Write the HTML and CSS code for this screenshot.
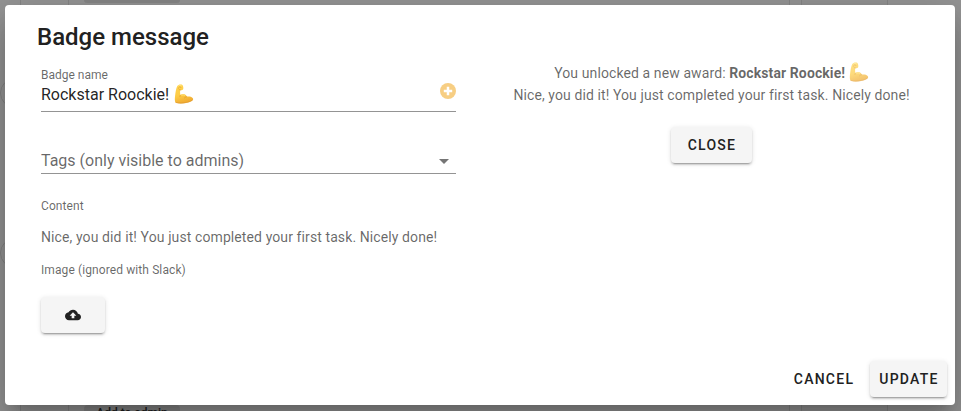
FILE: index.html
```html
<!DOCTYPE html>
<html lang="en">
<head>
<meta charset="utf-8">
<title>Badge message</title>
<link rel="stylesheet" href="styles.css">
</head>
<body>
<svg class="defs" aria-hidden="true">
  <defs>
    <linearGradient id="skin" x1="0" y1="0" x2="0.3" y2="1">
      <stop offset="0" stop-color="#ffd451"/>
      <stop offset="0.6" stop-color="#fdcb45"/>
      <stop offset="1" stop-color="#f0ac33"/>
    </linearGradient>
    <symbol id="biceps" viewBox="0 0 20 20">
      <path d="M3.200 2.200C4 .8 6.200.1 7.600.6c1.200.5 1.900 2.300 1.700 4-.1 1.200-1.100 1.900-2.300 1.600l-.9-.2c0 1.700 0 3.400.1 5.100 1.600-1.400 4.200-1.500 5.500-.2.5.500.9 1 1.200 1.700 2.100-.4 4.200-.1 5.700 1.300 1 1.100.5 2.100-.5 2.800-1.700 1.200-3.500 1.700-5.500 2.100-3.500.8-7.700 1-10.700 0C.5 17.700.8 14 1.200 10.800 1.500 8.200 2.200 4 3.200 2.200z" fill="url(#skin)"/>
      <path d="M4.800 3.300c.8-.8 1.900-.5 2.200.2M4.600 4.800c.5.900 1.200 1.200 2 1.300M6.300 11.100c-.3.500-.4.900-.4 1.400M12.700 12.700c-1 .2-1.700.5-2.200 1.100M1.900 18.500c3.200 1 7.500.7 11-.1 2-.5 3.700-1 5.200-2" fill="none" stroke="#dc9328" stroke-width=".6" stroke-linecap="round"/>
      <path d="M4.800 1.700c.8-.5 1.800-.5 2.500 0M8 11.200c.9-.6 2-.5 2.600.1" fill="none" stroke="#ffeb8a" stroke-width=".8" stroke-linecap="round"/>
    </symbol>
  </defs>
</svg>
<div class="page">
  <div class="col gutter"></div>
  <div class="col rail"></div>
  <div class="col main">
    <div class="chip"></div>
    <div class="chip">Add to admin</div>
  </div>
  <div class="col gap"></div>
  <div class="col side"></div>
  <div class="col rest"></div>
  <i class="dot dot-top"></i>
  <i class="dot dot-mid"></i>
</div>
<div class="overlay">
  <section class="dialog">
    <h1 class="title">Badge message</h1>
    <div class="body">
      <div class="form">
        <div class="field name">
          <div class="field-text">
            <label class="label">Badge name</label>
            <div class="value">Rockstar Roockie! <svg class="emoji"><use href="#biceps"/></svg></div>
          </div>
          <svg class="plus" viewBox="0 0 16 16"><circle cx="8" cy="8" r="8" fill="#f7ce83"/><path d="M8 3.800v8.400M3.800 8h8.400" stroke="#fff" stroke-width="2.500"/></svg>
        </div>
        <div class="field tags">
          <span>Tags (only visible to admins)</span>
          <svg class="caret" viewBox="0 0 10 5"><path d="M0 0h10L5 5z" fill="#757575"/></svg>
        </div>
        <div class="caption">Content</div>
        <div class="copy content">Nice, you did it! You just completed your first task. Nicely done!</div>
        <div class="caption image">Image (ignored with Slack)</div>
        <button class="btn upload"><svg class="cloud" viewBox="0 0 24 24"><path fill="#212121" d="M19.350 10.040C18.670 6.590 15.640 4 12 4 9.110 4 6.600 5.640 5.350 8.040 2.340 8.360 0 10.910 0 14c0 3.310 2.690 6 6 6h13c2.760 0 5-2.240 5-5 0-2.640-2.050-4.780-4.650-4.960zM14 13v4h-4v-4H7l5-5 5 5h-3z"/></svg></button>
      </div>
      <div class="preview copy">
        <div class="award">You unlocked a new award: <b>Rockstar Roockie! <svg class="emoji faded"><use href="#biceps"/></svg></b></div>
        <div>Nice, you did it! You just completed your first task. Nicely done!</div>
        <button class="btn close">CLOSE</button>
      </div>
    </div>
    <footer class="actions">
      <button class="btn flat">CANCEL</button>
      <button class="btn update">UPDATE</button>
    </footer>
  </section>
</div>
</body>
</html>
```
FILE: styles.css
```css
* { box-sizing: border-box; }
body {
  margin: 0;
  width: 961px;
  height: 411px;
  overflow: hidden;
  position: relative;
  background: #fafafa;
  font-family: Roboto, sans-serif;
  color: #212121;
}
.defs { position: absolute; width: 0; height: 0; }

.page { display: flex; height: 411px; position: relative; overflow: hidden; }
.col { border-right: 1px solid #dcdcdc; }
.gutter { width: 21px; }
.rail { width: 48px; }
.main {
  width: 721px;
  padding-left: 15px;
  display: flex;
  flex-direction: column;
  gap: 402px;
}
.chip {
  width: 96px;
  height: 28px;
  flex: none;
  border-radius: 4px;
  background: #dedede;
  font-size: 12px;
  font-weight: 500;
  line-height: 16px;
  text-align: center;
}
.chip:first-child { height: 3px; border-radius: 0 0 4px 4px; }
.gap { width: 12px; }
.side { width: 86px; background: #f5f5f5; }
.rest { flex: 1; border: 0; }
.dot {
  position: absolute;
  left: 0;
  width: 30px;
  height: 30px;
  border: 1px solid #d8d8d8;
  border-radius: 50%;
}
.dot-top { top: 78px; }
.dot-mid { top: 238px; }

.overlay {
  position: absolute;
  inset: 0;
  padding: 5px 6px 6px 5px;
  background: rgba(33, 33, 33, 0.46);
}
.dialog {
  display: flex;
  flex-direction: column;
  height: 400px;
  padding: 16px 8px 8px 32px;
  border-radius: 4px;
  background: #fff;
  box-shadow: 0 11px 15px -7px rgba(0, 0, 0, 0.2), 0 24px 38px 3px rgba(0, 0, 0, 0.14), 0 9px 46px 8px rgba(0, 0, 0, 0.12);
}
.title { margin: 0; font-size: 24px; font-weight: 500; line-height: 32px; }
.body { display: flex; padding-left: 4px; flex: 1; }
.form { width: 415px; display: flex; flex-direction: column; align-items: flex-start; }
.field {
  width: 100%;
  display: flex;
  justify-content: space-between;
  border-bottom: 1px solid #949494;
}
.name { height: 59px; padding-top: 14px; }
.label { display: block; font-size: 12px; line-height: 16px; color: rgba(0, 0, 0, 0.6); }
.value { font-size: 16px; line-height: 24px; color: rgba(0, 0, 0, 0.87); white-space: nowrap; }
.emoji { width: 20px; height: 20px; vertical-align: -4px; }
.value .emoji { margin-left: 1px; }
.faded { opacity: 0.7; }
.plus { width: 16px; height: 16px; margin-top: 16px; }
.tags { height: 62px; padding: 37px 7px 0 0; font-size: 16px; line-height: 24px; color: rgba(0, 0, 0, 0.6); }
.caret { width: 10px; height: 5px; margin-top: 10px; }
.caption { margin-top: 22px; font-size: 12px; line-height: 20px; letter-spacing: 0.1px; color: rgba(0, 0, 0, 0.6); }
.copy { font-size: 14px; line-height: 22px; letter-spacing: 0.1px; color: rgba(0, 0, 0, 0.6); white-space: nowrap; }
.content { margin-top: 10px; }
.image { margin-top: 12px; }
.btn {
  height: 36px;
  padding: 0 0 1px 1px;
  border: 0;
  border-radius: 4px;
  background: #f5f5f5;
  color: #212121;
  font: 500 14px/34px Roboto, sans-serif;
  letter-spacing: 1.25px;
  box-shadow: 0 3px 1px -2px rgba(0, 0, 0, 0.2), 0 2px 2px 0 rgba(0, 0, 0, 0.14), 0 1px 5px 0 rgba(0, 0, 0, 0.12);
}
.upload { width: 64px; padding: 0; margin-top: 17px; display: flex; align-items: center; justify-content: center; }
.cloud { width: 16px; height: 16px; }
.preview { flex: 1; margin-left: 20px; padding: 9px 0 0; display: flex; flex-direction: column; align-items: center; }
.award { height: 22px; }
.close { width: 81px; margin-top: 21px; }
.actions { display: flex; justify-content: flex-end; gap: 8px; }
.flat { width: 76px; padding-left: 0; background: none; box-shadow: none; }
.update { width: 77px; }
```
